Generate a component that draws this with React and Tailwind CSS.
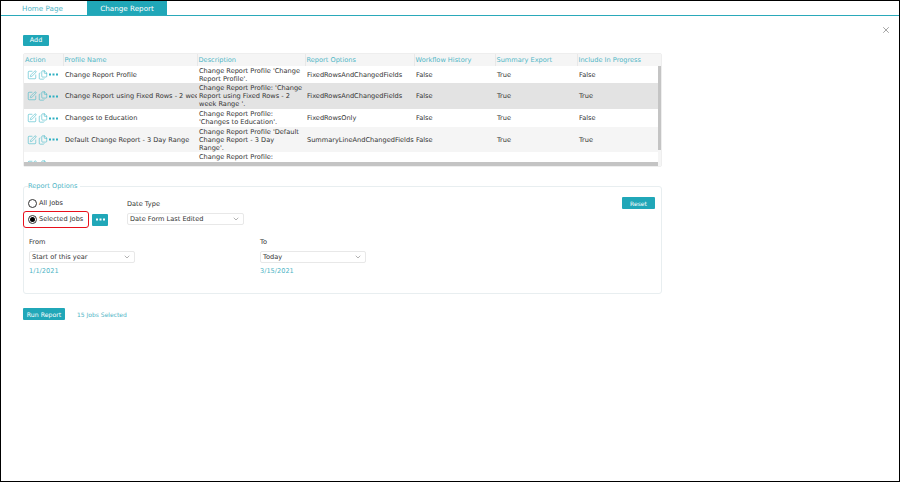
import { SquarePen, Files, X, ChevronDown } from 'lucide-react'

const columns = [
  { label: 'Action', width: 'w-[39px]' },
  { label: 'Profile Name', width: 'w-[134px]' },
  { label: 'Description', width: 'w-[108px]' },
  { label: 'Report Options', width: 'w-[109px]' },
  { label: 'Workflow History', width: 'w-[81px]' },
  { label: 'Summary Export', width: 'w-[82px]' },
  { label: 'Include In Progress', width: 'w-[81px]' },
]

// descriptions keep the line breaks of the original column
const rows = [
  { name: 'Change Report Profile', desc: "Change Report Profile 'Change\nReport Profile'.", options: 'FixedRowsAndChangedFields', workflow: 'False', summary: 'True', progress: 'False', height: 'h-[17px]', bg: 'bg-white' },
  { name: 'Change Report using Fixed Rows - 2 week Range', desc: "Change Report Profile: 'Change\nReport using Fixed Rows - 2\nweek Range '.", options: 'FixedRowsAndChangedFields', workflow: 'False', summary: 'True', progress: 'True', height: 'h-[26px]', bg: 'bg-[#e3e3e3]' },
  { name: 'Changes to Education', desc: "Change Report Profile:\n'Changes to Education'.", options: 'FixedRowsOnly', workflow: 'False', summary: 'True', progress: 'False', height: 'h-[18px]', bg: 'bg-white' },
  { name: 'Default Change Report - 3 Day Range', desc: "Change Report Profile 'Default\nChange Report - 3 Day\nRange'.", options: 'SummaryLineAndChangedFields', workflow: 'False', summary: 'True', progress: 'True', height: 'h-[25px]', bg: 'bg-[#f5f5f5]' },
  { name: '', desc: 'Change Report Profile:', options: '', workflow: '', summary: '', progress: '', height: 'h-[26px]', bg: 'bg-white' },
]

function Dots({ className }) {
  return (
    <svg width="9" height="3" viewBox="0 0 9 3" className={className} fill="currentColor">
      <rect x="0" y="0.5" width="2" height="2" />
      <rect x="3.5" y="0.5" width="2" height="2" />
      <rect x="7" y="0.5" width="2" height="2" />
    </svg>
  )
}

function Select({ value, width }) {
  return (
    <div className={`flex items-center justify-between h-[12px] pl-[2px] pr-[3px] bg-white border border-[#e8e8e8] rounded-[2px] text-[#333] ${width}`}>
      <span>{value}</span>
      <ChevronDown size={8} strokeWidth={1.5} className="text-[#666]" />
    </div>
  )
}

function ProfileRow({ row }) {
  return (
    <tr className={`${row.height} ${row.bg} text-[#333]`}>
      <td className="px-0 align-middle">
        <div className="flex items-center pl-[3px] text-[#2fb0c2]">
          <SquarePen size={10} strokeWidth={1.3} />
          <Files size={10} strokeWidth={1.3} className="ml-[1px]" />
          <Dots className="ml-[1px]" />
        </div>
      </td>
      <td className="pl-[2px] pt-[1px] whitespace-nowrap overflow-hidden">{row.name}</td>
      <td className="pl-[2px] pt-[1px] leading-[8px] align-top whitespace-pre-line">{row.desc}</td>
      <td className="pl-[2px] pt-[1px] whitespace-nowrap overflow-hidden">{row.options}</td>
      <td className="pl-[2px] pt-[1px]">{row.workflow}</td>
      <td className="pl-[2px] pt-[1px]">{row.summary}</td>
      <td className="pl-[2px] pt-[1px]">{row.progress}</td>
    </tr>
  )
}

export default function App() {
  return (
    <div className="w-[900px] h-[482px] border border-black bg-white text-[6.6px] leading-[9px] overflow-hidden" style={{ fontFamily: '"DejaVu Sans", sans-serif' }}>
      <div className="flex h-[15px] border-b border-[#2aa9ba]">
        <div className="w-[86px] pl-[21px] pt-[3px] text-[#4fb5c6] text-[7.2px]">Home Page</div>
        <div className="w-[80px] bg-[#20a7b8] text-white text-center pt-[3px] text-[7.2px]">Change Report</div>
      </div>

      <div className="relative pl-[22px] pt-[19px]">
        <X size={10} strokeWidth={1.6} className="absolute left-[880px] top-[9px] text-[#777]" />

        <button className="block w-[26px] h-[11px] bg-[#20a7b8] text-white text-center rounded-[1px] font-medium text-[6.4px]">Add</button>

        <div className="w-[639px] h-[114px] mt-[7px] border border-[#eeeeee] rounded-[2px] flex flex-col">
          <div className="flex flex-1 min-h-0">
            <div className="w-[634px] overflow-hidden">
              <table className="table-fixed w-[634px] border-collapse">
                <thead>
                  <tr className="h-[12px] bg-[#f5f5f5] text-[#4fb5c6]">
                    {columns.map(col => (
                      <th key={col.label} className={`${col.width} pl-[1px] font-normal text-left whitespace-nowrap border-r border-[#e8e8e8]`}>{col.label}</th>
                    ))}
                  </tr>
                </thead>
                <tbody>
                  {rows.map((row, i) => <ProfileRow key={i} row={row} />)}
                </tbody>
              </table>
            </div>
            <div className="flex-1 bg-[#f5f5f5] pt-[12px] pb-[12px]">
              <div className="h-full bg-[#c4c4c4]" />
            </div>
          </div>
          <div className="h-[4px] bg-[#f5f5f5]">
            <div className="h-full w-[634px] bg-[#c4c4c4]" />
          </div>
        </div>

        <fieldset className="w-[639px] h-[112px] mt-[15px] border border-[#e8eef0] rounded-[3px] pl-[4px] pr-[6px]">
          <legend className="pr-[3px] text-[#4fb5c6]">Report Options</legend>
          <div className="flex">
            <div className="w-[101px]">
              <label className="flex items-center h-[12px] mt-[6px] text-[#333]">
                <span className="w-[9px] h-[9px] rounded-full border border-[#333] mr-[2px]" />
                All Jobs
              </label>
              <div className="flex items-center mt-[2px] -ml-[5px]">
                <label className="flex items-center w-[66px] h-[17px] border-[1.5px] border-[#e8101c] rounded-[3px] pl-[4px] text-[#333]">
                  <span className="flex items-center justify-center w-[9px] h-[9px] rounded-full border border-[#333] mr-[2px]">
                    <span className="w-[5px] h-[5px] rounded-full bg-black" />
                  </span>
                  Selected Jobs
                </label>
                <button className="flex items-center justify-center w-[16px] h-[12px] ml-[3px] bg-[#20a7b8] text-white rounded-[1px]">
                  <Dots />
                </button>
              </div>
            </div>
            <div className="ml-[-2px] pt-[9px]">
              <div className="text-[#333] h-[9px]">Date Type</div>
              <div className="mt-[4px]"><Select value="Date Form Last Edited" width="w-[117px]" /></div>
            </div>
            <button className="ml-auto mt-[6px] w-[33px] h-[12px] bg-[#20a7b8] text-white rounded-[1px] text-[6px]">Reset</button>
          </div>
          <div className="flex mt-[10px] pl-[1px]">
            <div className="w-[231px]">
              <div className="text-[#333]">From</div>
              <div className="mt-[4px]"><Select value="Start of this year" width="w-[106px]" /></div>
              <div className="mt-[4px] text-[#4fb5c6]">1/1/2021</div>
            </div>
            <div>
              <div className="text-[#333]">To</div>
              <div className="mt-[4px]"><Select value="Today" width="w-[106px]" /></div>
              <div className="mt-[4px] text-[#4fb5c6]">3/15/2021</div>
            </div>
          </div>
        </fieldset>

        <div className="flex items-center mt-[14px]">
          <button className="w-[42px] h-[12px] bg-[#20a7b8] text-white rounded-[1px] text-[6.2px]">Run Report</button>
          <span className="ml-[12px] text-[#4fb5c6] text-[6px]">15 Jobs Selected</span>
        </div>
      </div>
    </div>
  )
}
